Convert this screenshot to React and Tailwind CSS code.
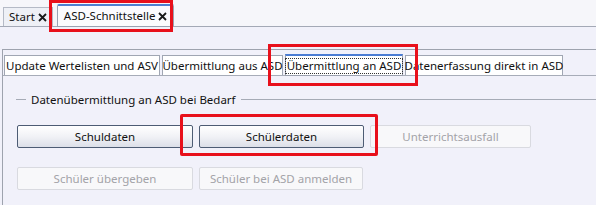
import React from 'react';

const topTabs = [
  { label: 'Start', active: false },
  { label: 'ASD-Schnittstelle', active: true },
];

const innerTabs = [
  { label: 'Update Wertelisten und ASV', w: 'w-[156px]' },
  { label: 'Übermittlung aus ASD', w: 'w-[121px]' },
  { label: 'Übermittlung an ASD', w: 'w-[118px]', active: true },
  { label: 'Datenerfassung direkt in ASD', w: 'w-[158px]' },
];

function CloseX() {
  return (
    <svg width="9" height="9" viewBox="0 0 9 9" className="ml-[3px]">
      <path d="M1 1 L8 8 M8 1 L1 8" stroke="#1a1a1a" strokeWidth="1.8" />
    </svg>
  );
}

function Btn({ children, disabled, w }) {
  return (
    <div
      className={`${w} h-[23px] flex items-center justify-center rounded-[2px] border whitespace-nowrap ${
        disabled
          ? 'border-[#d9dae0] bg-[#f8f8fa] text-[#a3a3a8]'
          : 'border-[#4d5c74] bg-gradient-to-b from-[#ffffff] via-[#f1f2f6] to-[#dcdfe8] text-[#111]'
      }`}
    >
      {children}
    </div>
  );
}

export default function App() {
  return (
    <div
      className="relative w-[596px] h-[205px] overflow-hidden bg-[#f1f1fa] text-[11.5px] text-[#111] whitespace-nowrap"
      style={{ fontFamily: '"Noto Sans", "DejaVu Sans", sans-serif' }}
    >
      {/* top document tabs */}
      <div className="h-[27px] flex items-end pl-[3px] gap-[4px] bg-[#f6f6fa] border-b border-[#a4a9b6]">
        {topTabs.map((t) =>
          t.active ? (
            <div
              key={t.label}
              className="h-[23px] -mb-px flex items-center px-[6px] bg-[#fbfbfe] border border-[#9aa2b2] border-t-2 border-t-[#4f7fd0] rounded-t-[2px]"
            >
              {t.label}
              <CloseX />
            </div>
          ) : (
            <div
              key={t.label}
              className="h-[19px] flex items-center px-[5px] bg-[#eef0f6] border border-b-0 border-[#b5bac6]"
            >
              {t.label}
              <CloseX />
            </div>
          )
        )}
      </div>

      {/* panel */}
      <div className="mt-[22px] ml-[2px] border-t border-l border-[#9ea3ae] h-[160px]">
        {/* inner tabs */}
        <div className="mt-[4px] h-[22px] flex items-end pl-[1px] gap-[2px] border-b border-[#a7acb8]">
          {innerTabs.map((t) =>
            t.active ? (
              <div
                key={t.label}
                className={`${t.w} h-[22px] -mb-px flex items-center justify-center bg-white border border-[#9aa0ae] border-t-2 border-t-[#4a7cd4]`}
              >
                <span className="px-[1px] leading-[14px] border border-dotted border-[#333]">{t.label}</span>
              </div>
            ) : (
              <div
                key={t.label}
                className={`${t.w} h-[20px] flex items-center justify-center bg-white border border-b-0 border-[#a0a6b3]`}
              >
                {t.label}
              </div>
            )
          )}
        </div>

        {/* group */}
        <div className="mt-[15px] flex items-center">
          <div className="w-[10px] h-px bg-[#a6abb6] ml-[13px]" />
          <span className="px-[5px]">Datenübermittlung an ASD bei Bedarf</span>
          <div className="flex-1 h-px bg-[#a6abb6]" />
        </div>

        <div className="mt-[17px] ml-[14px] flex flex-col gap-[19px]">
          <div className="flex gap-[6px]">
            <Btn w="w-[176px]">Schuldaten</Btn>
            <Btn w="w-[165px]">Schülerdaten</Btn>
            <Btn w="w-[161px]" disabled>Unterrichtsausfall</Btn>
          </div>
          <div className="flex gap-[6px]">
            <Btn w="w-[176px]" disabled>Schüler übergeben</Btn>
            <Btn w="w-[164px]" disabled>Schüler bei ASD anmelden</Btn>
          </div>
        </div>
      </div>

      {/* red highlight annotations */}
      <div className="absolute left-[49px] top-0 w-[124px] h-[32px] border-[3px] border-[#e8101b]" />
      <div className="absolute left-[268px] top-[44px] w-[150px] h-[42px] border-[3px] border-[#e8101b]" />
      <div className="absolute left-[180px] top-[114px] w-[198px] h-[42px] border-[3px] border-[#e8101b] rounded-[2px]" />
    </div>
  );
}
